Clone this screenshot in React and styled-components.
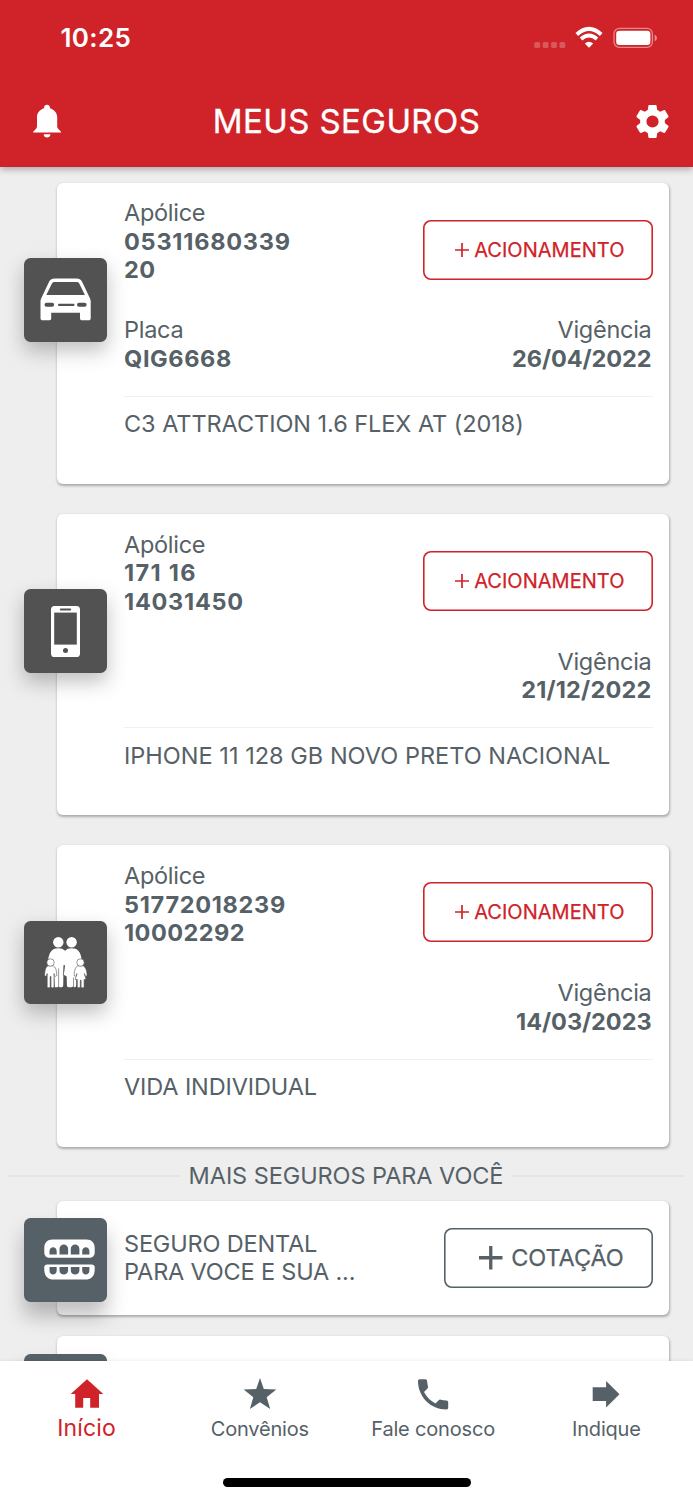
import React from 'react';
import styled, { createGlobalStyle } from 'styled-components';

const red = '#cf2329';
const slate = '#566167';

const GlobalStyle = createGlobalStyle`
  * { box-sizing: border-box; }
  body {
    margin: 0;
    background: #eee;
    font-family: Inter, "Liberation Sans", sans-serif;
    color: ${slate};
  }
`;

const Screen = styled.div`
  display: flex;
  flex-direction: column;
  width: 693px;
  height: 1500px;
  overflow: hidden;
  background: #eee;
`;

const Header = styled.header`
  flex: none;
  position: relative;
  z-index: 2;
  height: 167px;
  background: ${red};
  color: #fff;
  box-shadow: 0 2px 7px rgba(0, 0, 0, 0.32);
`;

const StatusBar = styled.div`
  display: flex;
  align-items: center;
  justify-content: space-between;
  height: 76px;
  padding: 0 35.5px 0 60.5px;
`;

const Clock = styled.span`
  font-size: 26px;
  font-weight: 600;
  line-height: 32px;
  letter-spacing: 0.35px;
`;

const StatusIcons = styled.div`
  display: flex;
  align-items: center;
  svg { display: block; }
`;

const TitleBar = styled.div`
  display: grid;
  grid-template-columns: 1fr auto 1fr;
  align-items: center;
  height: 90px;
  padding: 0 24px 0 30px;
  svg { display: block; }
  svg:last-child { justify-self: end; }
`;

const Title = styled.h1`
  margin: 0 6px 0.5px 0;
  font-size: 33px;
  font-weight: 400;
  line-height: 40px;
  letter-spacing: 0.42px;
  -webkit-text-stroke: 0.35px currentColor;
`;

const Content = styled.main`
  flex: 1;
  min-height: 0;
  overflow: hidden;
  padding-top: 15.5px;
`;

const Card = styled.section`
  display: flex;
  align-items: ${(p) => (p.$compact ? 'center' : 'flex-start')};
  height: ${(p) => (p.$compact ? '114px' : '301.5px')};
  margin: 0 24px ${(p) => (p.$compact ? '21.7px' : '29.9px')} 57px;
  padding-right: 16.5px;
  border-radius: 6px;
  background: #fff;
  box-shadow: 0.5px 1.5px 2.5px rgba(0, 0, 0, 0.28);
`;

const Tile = styled.div`
  flex: none;
  display: flex;
  align-items: center;
  justify-content: center;
  width: 83.6px;
  height: 83.6px;
  margin: ${(p) => (p.$compact ? '4px' : '75.5px')} 16.8px 0 -33.4px;
  padding-left: ${(p) => (p.$compact ? '8px' : '0')};
  border-radius: 6.5px;
  background: ${(p) => (p.$compact ? slate : '#525252')};
  box-shadow: 0 ${(p) => (p.$compact ? '14px 20px' : '9px 20px')} rgba(0, 0, 0, 0.25);
  svg { display: block; }
`;

const Details = styled.div`
  flex: 1;
  min-width: 0;
`;

const Row = styled.div`
  display: flex;
  justify-content: space-between;
  height: ${(p) => p.$height};
`;

const Field = styled.div`
  padding-top: ${(p) => p.$top || '0.9px'};
  padding-right: 1px;
  text-align: ${(p) => p.$align || 'left'};
  font-size: 23.5px;
  line-height: 28.5px;
  white-space: nowrap;
`;

const Label = styled.div`
  letter-spacing: -0.28px;
`;

const Value = styled.div`
  font-weight: 700;
  letter-spacing: ${(p) => p.$spacing || 0.7}px;
`;

const Description = styled.p`
  margin: 0;
  padding-top: 13.2px;
  border-top: 1.5px solid #f0f0f0;
  font-size: 23.5px;
  line-height: 28.5px;
  letter-spacing: ${(p) => p.$spacing || 0}px;
  white-space: nowrap;
`;

const OutlineButton = styled.button`
  flex: none;
  display: flex;
  align-items: center;
  justify-content: flex-end;
  width: ${(p) => (p.$quote ? '209px' : '229.5px')};
  height: 60px;
  margin-top: ${(p) => (p.$quote ? '0' : '37px')};
  padding: 0 ${(p) => (p.$quote ? '28.8px' : '28px')} 0 0;
  border: 0;
  border-radius: 8px;
  box-shadow: inset 0 0 0 1.6px currentColor;
  background: #fff;
  color: ${(p) => (p.$quote ? slate : red)};
  font-family: inherit;
  font-size: ${(p) => (p.$quote ? '23.5px' : '20px')};
  font-weight: 400;
  line-height: 28px;
  letter-spacing: ${(p) => (p.$quote ? '-0.1px' : '0.03px')};
  -webkit-text-stroke: 0.25px currentColor;
  svg { display: block; margin-right: ${(p) => (p.$quote ? '8.5px' : '5px')}; }
`;

const Separator = styled.div`
  display: flex;
  align-items: center;
  gap: 8.5px;
  height: 54px;
  margin: -29.9px 9px 0 8px;
  padding-top: 4.5px;
  font-size: 23.5px;
  line-height: 28px;
  letter-spacing: -0.08px;
  white-space: nowrap;
  &::before, &::after {
    content: '';
    flex: 1;
    height: 2px;
    background: #e3e5e5;
  }
`;

const OfferText = styled.div`
  flex: 1;
  padding-top: 1.3px;
  font-size: 23.5px;
  line-height: 28.5px;
`;

const OfferLine = styled.div`
  letter-spacing: ${(p) => p.$spacing}px;
  white-space: nowrap;
`;

const TabBar = styled.nav`
  flex: none;
  position: relative;
  z-index: 2;
  height: 139.5px;
  background: #fff;
  box-shadow: 0 -1px 3px rgba(0, 0, 0, 0.06);
`;

const Tabs = styled.div`
  display: grid;
  grid-template-columns: repeat(4, 1fr);
  height: 117.5px;
`;

const Tab = styled.a`
  display: flex;
  flex-direction: column;
  align-items: center;
  padding-top: 15px;
  color: ${(p) => (p.$active ? red : slate)};
  font-size: ${(p) => (p.$active ? '23px' : '20px')};
  line-height: 28px;
  letter-spacing: ${(p) => (p.$active ? '0.19px' : '-0.18px')};
  svg { display: block; margin-bottom: ${(p) => (p.$active ? '3.5px' : '4.9px')}; }
`;

const HomeIndicator = styled.div`
  width: 248px;
  height: 8.5px;
  margin: 0 auto;
  border-radius: 5px;
  background: #000;
`;

const SignalIcon = () => (
  <svg width="41" height="24" viewBox="0 0 41 24" fill="#fff" fillOpacity=".24">
    {[0.3, 8.7, 17.1, 25.5].map((x) => (
      <rect key={x} x={x} y="16" width="5.8" height="6" rx="1.6" />
    ))}
  </svg>
);

const WifiIcon = () => (
  <svg width="38" height="24" viewBox="0 0 38 24" fill="none" stroke="#fff">
    <path d="M1.8 8.500 Q14 -2.600 26.200 8.500" strokeWidth="4" />
    <path d="M6 13 Q14 6 22 13" strokeWidth="3.7" />
    <path d="M14 21.800 L9.800 17.500 Q14 14.100 18.200 17.500 Z" fill="#fff" stroke="none" />
  </svg>
);

const BatteryIcon = () => (
  <svg width="45" height="24" viewBox="0 0 45 24">
    <rect x="1" y="2.4" width="38.4" height="19" rx="5.4" fill="none" stroke="#fff" strokeOpacity=".45" strokeWidth="1.3" />
    <rect x="3.2" y="4.7" width="34.2" height="14.4" rx="3.3" fill="#fff" />
    <path d="M41.6 8.7c1.4.5 2.3 1.7 2.3 3.2s-.9 2.7-2.3 3.2z" fill="#fff" fillOpacity=".5" />
  </svg>
);

const BellIcon = () => (
  <svg width="34" height="34" viewBox="0 0 34 34" fill="#fff">
    <path d="M17 .8c1.7 0 2.9 1.1 2.9 2.8v.6c4.4 1.4 7.300 4.600 7.300 9.100v8.400c0 1.500.4 2.600 1.400 3.600l2.400 2.400v.9H3.200v-.9l2.400-2.400c1-1 1.400-2.100 1.400-3.600v-8.400c0-4.500 2.700-7.700 7.100-9.100v-.6C14.100 1.900 15.300.8 17 .8z" />
    <path d="M13.600 30.200h6.900c-.3 2.100-1.600 3.200-3.500 3.200s-3.100-1.100-3.400-3.200z" />
  </svg>
);

const GearIcon = () => (
  <svg width="33" height="33" viewBox="2 2 20 20" fill="#fff" fillRule="evenodd">
    <path d="M19.430 12.980c.04-.32.07-.64.07-.98s-.03-.66-.07-.98l2.110-1.650c.19-.15.24-.42.12-.64l-2-3.460c-.12-.22-.39-.3-.61-.22l-2.490 1c-.52-.4-1.080-.73-1.690-.98l-.38-2.650C14.460 2.180 14.250 2 14 2h-4c-.25 0-.46.18-.49.42l-.38 2.650c-.61.25-1.170.59-1.690.98l-2.490-1c-.23-.09-.49 0-.61.22l-2 3.460c-.13.22-.07.49.12.64l2.110 1.650c-.04.32-.07.65-.07.98s.03.66.07.98l-2.110 1.650c-.19.15-.24.42-.12.64l2 3.460c.12.22.39.3.61.22l2.490-1c.52.4 1.080.73 1.690.98l.38 2.650c.03.24.24.42.49.42h4c.25 0 .46-.18.49-.42l.38-2.650c.61-.25 1.170-.59 1.690-.98l2.490 1c.23.09.49 0 .61-.22l2-3.460c.12-.22.07-.49-.12-.64zM12 15.700a3.700 3.700 0 1 1 0-7.400 3.700 3.700 0 0 1 0 7.400z" />
  </svg>
);

const PlusIcon = ({ size, weight }) => (
  <svg width={size} height={size} viewBox={`0 0 ${size} ${size}`} stroke="currentColor" strokeWidth={weight}>
    <path d={`M${size / 2} 0V${size}M0 ${size / 2}H${size}`} />
  </svg>
);

const CarIcon = () => (
  <svg width="51" height="43" viewBox="0 0 51 43">
    <path fill="#fff" fillRule="evenodd" d="M15 .6h21.200c3.300 0 5.200 1.400 6.400 4.100l7.200 15.200c.7 1.400.9 2.400.9 4v16.300c0 1.300-.8 2.100-2.100 2.100h-6.500c-1.300 0-2.100-.8-2.100-2.100v-5.500H11.200v5.500c0 1.300-.8 2.100-2.100 2.100H2.600c-1.300 0-2.100-.8-2.100-2.100V23.900c0-1.600.2-2.600.9-4L8.600 4.700C9.800 2 11.700.6 15 .6zM15 4c-1.800 0-2.600.6-3.300 2L6.300 16.900h38.600L39.500 6c-.7-1.400-1.500-2-3.300-2z" />
    <g fill="#525252">
      <rect x="4.500" y="24.800" width="9.600" height="4" rx="2" />
      <rect x="37" y="24.800" width="9.600" height="4" rx="2" />
      <rect x="18" y="25.800" width="16.500" height="2.200" rx="1" />
    </g>
  </svg>
);

const PhoneDeviceIcon = () => (
  <svg width="29" height="51" viewBox="0 0 29 51">
    <rect width="29" height="51" rx="3.600" fill="#fff" />
    <g fill="#525252">
      <rect x="3.200" y="6.600" width="22.600" height="32" />
      <rect x="8.800" y="2.500" width="11.400" height="2" rx="1" />
      <circle cx="14.500" cy="44.500" r="2.500" />
    </g>
  </svg>
);

const FamilyIcon = () => (
  <svg width="43" height="51" viewBox="-1 0 43 51" fill="#fff">
    <circle cx="13.300" cy="5.300" r="5.200" />
    <circle cx="26.600" cy="5.300" r="5.200" />
    <path d="M9.500 11.800Q13.300 10.600 17.200 11.800L20 13.800L22.800 11.800Q26.600 10.600 30.500 11.800C34.500 13.500 36.300 18 36.600 23L31.200 31.500V48.500Q31 50.500 29.200 50.200L28 49.500L26.800 50.200H23.500Q22 50.200 21.900 48.500L21.700 39.500L18.800 37.800L20 28.200H18.600L18.200 48.700Q18 50.200 16.200 50.200H14.500L13.500 49.500L12.500 50.200H9.800L9 33L3.300 23C3.600 18 5.500 13.500 9.500 11.800Z" />
    <path d="M13.600 31.500V50M28.500 40.500V50M19.200 28L18.300 38.500" fill="none" stroke="#525252" strokeWidth=".6" />
    {[5.500, 35.500].map((x, i) => (
      <g key={x} stroke="#525252" strokeWidth=".6">
        <path d={i
          ? 'M32.800 28.800h5.300c2.300 1 3.700 4 4 9.200-.4 1.800-1.500 1.700-2 .7l-.7-2.200 1.600 6h-1.900v7.200c0 1.300-3 1.300-3 0v-6.500h-.8v6.500c0 1.300-3 1.300-3 0v-7.200h-2.100l1.800-6-.8 2.200c-.6 1-1.800.9-2-.7.2-5.200 1.400-8.200 3.600-9.200z'
          : 'M2.900 28.800h5.200c2.300 1 3.500 4 3.700 9.200-.3 1.700-1.600 1.700-2.200.6l-.6-2.100V49.800c0 1.300-3 1.300-3 0V39.500h-.8v10.300c0 1.300-3 1.300-3 0V36.500l-.6 2.100c-.6 1.100-1.800 1.100-2-.6.2-5.200 1.300-8.200 3.300-9.200z'} />
        <circle cx={x} cy="25.500" r="3.700" />
      </g>
    ))}
  </svg>
);

const TeethIcon = () => (
  <svg width="51" height="41" viewBox="0 0 51 41">
    <g fill="#fff">
      <path d="M8.500.4h34c5 0 8.200 3.200 8.200 8.200v4.900c0 3.300-2.200 5.300-5.500 5.300H5.800c-3.300 0-5.500-2-5.500-5.300V8.600C.3 3.600 3.500.4 8.500.4z" />
      <path d="M3.300 25.600h44.400c1.800 0 3 1 3 2.700v2.600c0 6-3.600 9.700-9.600 9.700H9.900c-6 0-9.600-3.700-9.600-9.700v-2.600c0-1.700 1.200-2.700 3-2.700z" />
    </g>
    <g fill={slate}>
      <path d="M5.500 15.500v-3.300c0-5.400 7.200-5.400 7.200 0v3.300zM15.500 15.500v-5.600c0-6 8.600-6 8.600 0v5.600zM26.800 15.500v-5.600c0-6 8.600-6 8.600 0v5.600zM38.200 15.500v-3.300c0-5.400 7.200-5.400 7.200 0v3.300z" />
      <path d="M5.500 28h7.200v3.500c0 5.300-7.200 5.300-7.200 0zM15.500 28h8.600v3.200c0 5.800-8.600 5.800-8.600 0zM26.800 28h8.600v3.200c0 5.800-8.600 5.800-8.600 0zM38.200 28h7.200v3.500c0 5.300-7.200 5.300-7.200 0z" />
    </g>
  </svg>
);

const HomeIcon = () => (
  <svg width="34" height="35" viewBox="0 0 34 35" fill="currentColor">
    <path d="M17 3.300L33.300 18H29V31.800H20.200V22H13.200V31.800H5.200V18H.700Z" />
  </svg>
);

const StarIcon = () => (
  <svg width="34" height="35" viewBox="0 0 34 35" fill="currentColor">
    <path d="M17 2L20.800 13.100L33.300 13.600L23.700 21.200L27.200 33L17 26.200L6.900 33L10.300 21.200L.7 13.600L13.200 13.100Z" />
  </svg>
);

const CallIcon = () => (
  <svg width="34" height="35" viewBox="0 0 34 35" fill="currentColor">
    <path d="M3.700 3.300H9.300C10.400 3.300 11 4 11.100 5C11.300 7 11.600 8.900 12 10.700C12.200 11.500 12 12.100 11.500 12.600L8 16C10.600 21 14.500 24.900 19.500 27.400L22.700 24.200C23.300 23.600 23.900 23.500 24.700 23.700C26.500 24.200 28.400 24.500 30.400 24.500C31.500 24.500 32.200 25.200 32.200 26.300V31.800C32.200 32.900 31.500 33.500 30.400 33.500C14.700 33.500 2 20.800 2 5C2 4 2.700 3.300 3.700 3.300Z" />
  </svg>
);

const ArrowIcon = () => (
  <svg width="34" height="35" viewBox="0 0 34 35" fill="currentColor">
    <path d="M3.700 11.300H17.100V5L30.500 18.200L17.100 31.400V25H3.700Z" />
  </svg>
);

const policies = [
  { icon: <CarIcon />, number: [['05311680339', 0.77], ['20', 0.5]], plate: 'QIG6668', until: '26/04/2022', untilSpacing: -0.08, name: 'C3 ATTRACTION 1.6 FLEX AT (2018)', spacing: -0.055 },
  { icon: <PhoneDeviceIcon />, number: [['171 16', 1.3], ['14031450', 0.75]], until: '21/12/2022', untilSpacing: 0.2, name: 'IPHONE 11 128 GB NOVO PRETO NACIONAL', spacing: 0.024 },
  { icon: <FamilyIcon />, number: [['51772018239', 0.7], ['10002292', 0.45]], until: '14/03/2023', untilSpacing: -0.05, name: 'VIDA INDIVIDUAL', spacing: -0.12 },
];

const PolicyCard = ({ icon, number, plate, until, untilSpacing, name, spacing }) => (
  <Card>
    <Tile>{icon}</Tile>
    <Details>
      <Row $height="133px">
        <Field $top="16.9px">
          <Label>Apólice</Label>
          {number.map(([line, gap]) => <Value key={line} $spacing={gap}>{line}</Value>)}
        </Field>
        <OutlineButton><PlusIcon size={14} weight={1.7} />ACIONAMENTO</OutlineButton>
      </Row>
      <Row $height="80.5px">
        <Field>
          {plate && <><Label>Placa</Label><Value $spacing={0.62}>{plate}</Value></>}
        </Field>
        <Field $align="right">
          <Label>Vigência</Label>
          <Value $spacing={untilSpacing}>{until}</Value>
        </Field>
      </Row>
      <Description $spacing={spacing}>{name}</Description>
    </Details>
  </Card>
);

export default function App() {
  return (
    <>
      <GlobalStyle />
      <Screen>
        <Header>
          <StatusBar>
            <Clock>10:25</Clock>
            <StatusIcons>
              <SignalIcon />
              <WifiIcon />
              <BatteryIcon />
            </StatusIcons>
          </StatusBar>
          <TitleBar>
            <BellIcon />
            <Title>MEUS SEGUROS</Title>
            <GearIcon />
          </TitleBar>
        </Header>
        <Content>
          {policies.map((policy) => <PolicyCard key={policy.name} {...policy} />)}
          <Separator>MAIS SEGUROS PARA VOCÊ</Separator>
          <Card $compact>
            <Tile $compact><TeethIcon /></Tile>
            <OfferText>
              <OfferLine $spacing={-0.18}>SEGURO DENTAL</OfferLine>
              <OfferLine $spacing={-0.18}>PARA VOCE E SUA ...</OfferLine>
            </OfferText>
            <OutlineButton $quote><PlusIcon size={23.5} weight={3.3} />COTAÇÃO</OutlineButton>
          </Card>
          <Card $compact>
            <Tile $compact />
          </Card>
        </Content>
        <TabBar>
          <Tabs>
            <Tab $active><HomeIcon />Início</Tab>
            <Tab><StarIcon />Convênios</Tab>
            <Tab><CallIcon />Fale conosco</Tab>
            <Tab><ArrowIcon />Indique</Tab>
          </Tabs>
          <HomeIndicator />
        </TabBar>
      </Screen>
    </>
  );
}
